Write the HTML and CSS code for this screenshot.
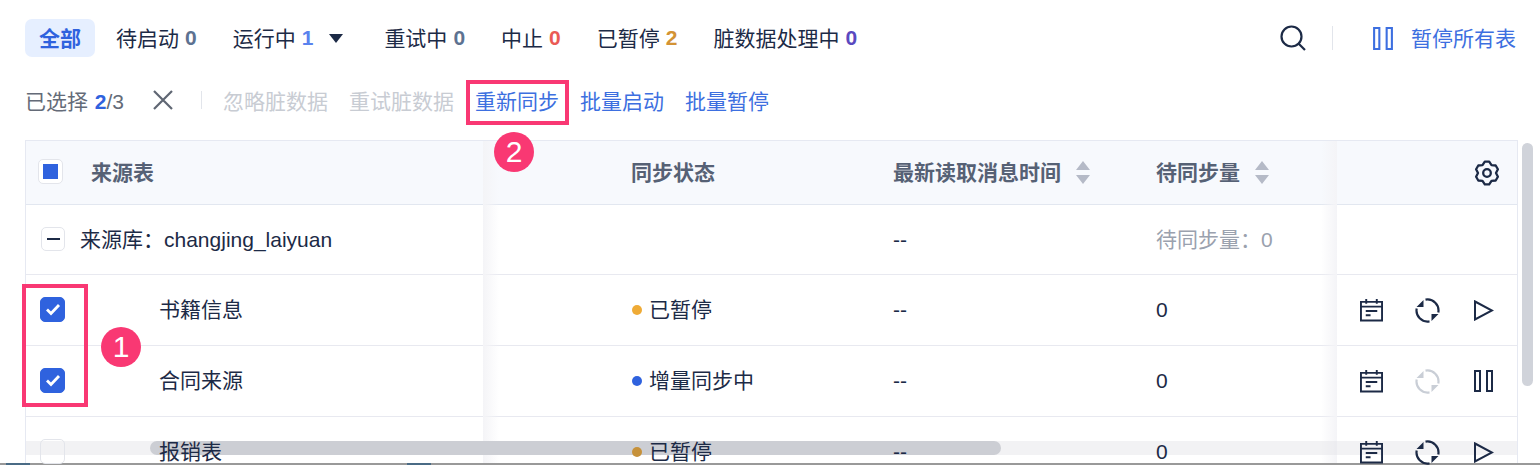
FILE: index.html
```html
<!DOCTYPE html>
<html lang="zh">
<head>
  <meta charset="UTF-8" />
  <title>同步任务</title>
  <link rel="stylesheet" href="styles.css">
</head>
<body>
  <svg class="defs" width="0" height="0">
    <symbol id="ic-cal" viewBox="0 0 24 24">
      <path d="M1 3.500h22v19.500H1zM1 8.500h22M6.500 0.500v5M17.500 0.500v5M6 13h12M6 17.500h5" fill="none" stroke="currentColor" stroke-width="2"/>
    </symbol>
    <symbol id="ic-sync" viewBox="0 0 25 25">
      <path d="M10.500 1.680A11 11 0 0 1 23.300 14.500M14.500 23.320A11 11 0 0 1 1.700 10.500" fill="none" stroke="currentColor" stroke-width="2.200"/>
      <path d="M8.500 2V9H1.500zM16.500 23V16h7z" fill="currentColor"/>
    </symbol>
    <symbol id="ic-play" viewBox="0 0 20 21">
      <path d="M1 1.500l17 9-17 9z" fill="none" stroke="currentColor" stroke-width="2"/>
    </symbol>
    <symbol id="ic-pause" viewBox="0 0 19 22">
      <path d="M1 1h5v20H1zM13 1h5v20h-5z" fill="none" stroke="currentColor" stroke-width="2"/>
    </symbol>
    <symbol id="ic-sort" viewBox="0 0 14 23">
      <path d="M7 0l7 9H0zM0 14h14l-7 9z" fill="currentColor"/>
    </symbol>
    <symbol id="ic-check" viewBox="0 0 16 16">
      <path d="M2 8.500l4 4 8-8.500" fill="none" stroke="currentColor" stroke-width="2.800"/>
    </symbol>
  </svg>

  <div class="page">
    <div class="tabs">
      <div class="tab-list">
        <span class="tab active"><span class="cjk">全部</span></span>
        <span class="tab first"><span class="cjk">待启动</span><b class="c-grey">0</b></span>
        <span class="tab"><span class="cjk">运行中</span><b class="c-blue">1</b><i class="caret"></i></span>
        <span class="tab"><span class="cjk">重试中</span><b class="c-grey">0</b></span>
        <span class="tab"><span class="cjk">中止</span><b class="c-red">0</b></span>
        <span class="tab"><span class="cjk">已暂停</span><b class="c-orange">2</b></span>
        <span class="tab"><span class="cjk">脏数据处理中</span><b class="c-purple">0</b></span>
      </div>
      <div class="tab-tools">
        <svg class="ic-search" viewBox="0 0 26 26"><circle cx="11.500" cy="11.500" r="10" fill="none" stroke="currentColor" stroke-width="2.200"/><path d="M18.500 18.500l6.500 6.500" stroke="currentColor" stroke-width="2.200"/></svg>
        <span class="vline"></span>
        <a class="pause-all"><svg class="ic-pause-all"><use href="#ic-pause"/></svg><span class="cjk">暂停所有表</span></a>
      </div>
    </div>

    <div class="batch">
      <span class="sel-count">已选择 <b>2</b>/3</span>
      <svg class="ic-close" viewBox="0 0 20 20"><path d="M1 1l18 18M19 1L1 19" stroke="currentColor" stroke-width="2.200"/></svg>
      <span class="vline short"></span>
      <a class="act off">忽略脏数据</a>
      <a class="act off">重试脏数据</a>
      <a class="act marked">重新同步</a>
      <a class="act">批量启动</a>
      <a class="act">批量暂停</a>
    </div>

    <div class="table-wrap">
      <div class="row head">
        <div class="c-name">
          <span class="box part"><i></i></span>
          <span class="name-title cjk2">来源表</span>
        </div>
        <div class="c-status"><span class="cjk2">同步状态</span></div>
        <div class="c-time"><span class="cjk2">最新读取消息时间</span><svg class="ic-sort"><use href="#ic-sort"/></svg></div>
        <div class="c-count"><span class="cjk2">待同步量</span><svg class="ic-sort"><use href="#ic-sort"/></svg></div>
        <div class="c-ops ops-head">
          <svg class="ic-gear" viewBox="-1 -1 26 26"><path d="M9.800.7h4.400l2.300 3.500 4.200.3 2.200 3.750L21 12l1.900 3.750-2.200 3.750-4.200.3-2.300 3.500H9.800l-2.300-3.500-4.200-.3-2.200-3.750L3 12 1.100 8.250 3.300 4.500l4.200-.3z" fill="none" stroke="currentColor" stroke-width="2.300" stroke-linejoin="round"/><circle cx="12" cy="12" r="3.800" fill="none" stroke="currentColor" stroke-width="2.300"/></svg>
        </div>
      </div>

      <div class="row group">
        <div class="c-name">
          <span class="box minus"><i></i></span>
          <span class="group-title cjk2">来源库：changjing_laiyuan</span>
        </div>
        <div class="c-status"></div>
        <div class="c-time">--</div>
        <div class="c-count muted"><span class="cjk2">待同步量：0</span></div>
        <div class="c-ops"></div>
      </div>

      <div class="row">
        <div class="c-name">
          <span class="box on"><svg><use href="#ic-check"/></svg></span>
          <span class="table-name cjk2">书籍信息</span>
        </div>
        <div class="c-status"><i class="dot orange"></i><span class="cjk2">已暂停</span></div>
        <div class="c-time">--</div>
        <div class="c-count">0</div>
        <div class="c-ops">
          <svg class="op op-cal"><use href="#ic-cal"/></svg>
          <svg class="op op-sync"><use href="#ic-sync"/></svg>
          <svg class="op op-run"><use href="#ic-play"/></svg>
        </div>
      </div>

      <div class="row">
        <div class="c-name">
          <span class="box on"><svg><use href="#ic-check"/></svg></span>
          <span class="table-name cjk2">合同来源</span>
        </div>
        <div class="c-status"><i class="dot blue"></i><span class="cjk2">增量同步中</span></div>
        <div class="c-time">--</div>
        <div class="c-count">0</div>
        <div class="c-ops">
          <svg class="op op-cal"><use href="#ic-cal"/></svg>
          <svg class="op op-sync off"><use href="#ic-sync"/></svg>
          <svg class="op op-hold"><use href="#ic-pause"/></svg>
        </div>
      </div>

      <div class="row last">
        <div class="c-name">
          <span class="box"></span>
          <span class="table-name cjk2">报销表</span>
        </div>
        <div class="c-status"><i class="dot gold"></i><span class="cjk2">已暂停</span></div>
        <div class="c-time">--</div>
        <div class="c-count">0</div>
        <div class="c-ops">
          <svg class="op op-cal"><use href="#ic-cal"/></svg>
          <svg class="op op-sync"><use href="#ic-sync"/></svg>
          <svg class="op op-run"><use href="#ic-play"/></svg>
        </div>
      </div>

      <div class="shadow-left"></div>
      <div class="shadow-right"></div>
      <div class="hbar"><div class="hthumb"></div></div>
    </div>
    <div class="vthumb"></div>
  </div>

  <div class="mark-box"></div>
  <span class="mark-num num-1">1</span>
  <span class="mark-num num-2">2</span>
  <div class="bottom-edge"><i></i><i class="second"></i></div>
</body>
</html>
```

FILE: styles.css
```css
html,
body {
  margin: 0;
  height: 465px;
  overflow: hidden;
  background: #fff;
}
body {
  font-family: "Liberation Sans", "Noto Sans CJK SC", sans-serif;
  font-size: 21px;
  color: #1c2a46;
  position: relative;
}
.defs {
  position: absolute;
}
.page {
  position: relative;
  padding: 19px 0 0 25px;
  width: 1493px;
}
/* the CJK font sits a little low next to the latin one */
.cjk {
  padding-bottom: 2px;
}
.cjk2 {
  padding-bottom: 4px;
}

/* tabs */
.tabs {
  display: flex;
  justify-content: space-between;
  align-items: center;
  height: 38px;
}
.tab-list {
  display: flex;
  align-items: center;
  gap: 36px;
}
.tab {
  display: flex;
  align-items: center;
  white-space: nowrap;
}
.tab b {
  font-weight: 700;
  margin-left: 6px;
}
.tab.active {
  width: 70px;
  height: 38px;
  justify-content: center;
  background: #e6efff;
  border-radius: 7px;
  color: #2f62de;
  font-weight: 700;
}
.tab.first {
  margin-left: -15px;
}
.caret {
  margin: 0 5px 0 16px;
  border-left: 7px solid transparent;
  border-right: 7px solid transparent;
  border-top: 9px solid #1c2a46;
}
.c-grey { color: #5d7291; }
.c-blue { color: #5a82ee; }
.c-red { color: #ea5a55; }
.c-orange { color: #d39334; }
.c-purple { color: #5a49bf; }

.tab-tools {
  display: flex;
  align-items: center;
}
.ic-search {
  width: 26px;
  height: 26px;
}
.vline {
  width: 1px;
  height: 24px;
  background: #e2e5eb;
  margin: 0 40px 0 26px;
}
.pause-all {
  display: flex;
  align-items: center;
  color: #3d6fe0;
  margin-right: 2px;
}
.ic-pause-all {
  width: 20px;
  height: 23px;
  margin-right: 18px;
}

/* batch bar */
.batch {
  display: flex;
  align-items: center;
  height: 30px;
  margin-top: 28px;
  color: #646b78;
}
.sel-count b {
  color: #2f62de;
  margin-left: 1px;
}
.ic-close {
  width: 20px;
  height: 20px;
  margin-left: 29px;
  color: #5f6673;
}
.vline.short {
  height: 18px;
  margin: 0 21px 0 28px;
}
.act {
  color: #3d6fe0;
  margin-right: 21px;
  white-space: nowrap;
}
.act.off {
  color: #c8ccd3;
}

/* table */
.table-wrap {
  position: relative;
  margin-top: 25px;
  width: 1493px;
  border-top: 1px solid #e6e9f2;
  border-left: 1px solid #e6e9f2;
  border-right: 1px solid #e6e9f2;
  box-sizing: border-box;
}
.row {
  display: grid;
  grid-template-columns: 605px 262px 263px 181px 1fr;
  align-items: center;
  height: 70px;
  border-bottom: 1px solid #e8e9f0;
}
.row.head {
  height: 63px;
  background: #f7f9fd;
  border-bottom-color: #e2e7f0;
  color: #566175;
  font-weight: 700;
}
.row.group {
  height: 69px;
}
.row.last > * {
  position: relative;
  z-index: 3;
}
.c-name {
  display: flex;
  align-items: center;
}
.box {
  flex: none;
  width: 25px;
  height: 25px;
  margin: 0 0 2px 14px;
  border: 1px solid #e3e5eb;
  border-radius: 5px;
  box-sizing: border-box;
  display: flex;
  align-items: center;
  justify-content: center;
}
.box.part {
  margin-left: 12px;
  background: #fff;
}
.box.part i {
  width: 15px;
  height: 15px;
  background: #2f62de;
}
.box.minus {
  width: 24px;
  height: 24px;
  margin-left: 15px;
}
.box.minus i {
  width: 13px;
  height: 2px;
  background: #1c2a46;
}
.box.on {
  background: #2f62de;
  border-color: #2f62de;
  color: #fff;
}
.box.on svg {
  width: 16px;
  height: 16px;
}
.name-title {
  margin-left: 28px;
}
.group-title {
  margin-left: 15px;
}
.table-name {
  margin-left: 94px;
}
.c-time,
.c-count,
.c-status {
  display: flex;
  align-items: center;
  white-space: nowrap;
}
.ic-sort {
  width: 14px;
  height: 23px;
  margin-left: 15px;
  color: #b5bac7;
}
.muted {
  color: #9aa1ae;
}
.dot {
  width: 10px;
  height: 10px;
  border-radius: 50%;
  margin: 0 7px 0 1px;
}
.dot.orange { background: #efab36; }
.dot.blue { background: #2f62de; }
.dot.gold { background: #c6913a; }
.c-ops {
  display: flex;
  align-items: center;
  position: relative;
  z-index: 2;
  height: 100%;
  padding-left: 23px;
  color: #1c2a46;
}
.ops-head {
  justify-content: flex-end;
  padding-right: 17px;
}
.ic-gear {
  width: 26px;
  height: 26px;
}
.op {
  flex: none;
}
.op-cal {
  width: 23px;
  height: 24px;
  margin-right: 32px;
}
.op-sync {
  width: 25px;
  height: 25px;
  margin-right: 34px;
}
.op-sync.off {
  color: #c9ced6;
}
.op-run {
  width: 20px;
  height: 21px;
}
.op-hold {
  width: 19px;
  height: 22px;
}

.shadow-left,
.shadow-right {
  position: absolute;
  top: 0;
  bottom: 0;
  width: 16px;
  pointer-events: none;
}
.shadow-left {
  left: 457px;
  background: linear-gradient(to right, #f4f4f7, rgba(255, 255, 255, 0));
}
.shadow-right {
  left: 1295px;
  background: linear-gradient(to left, #f4f4f7, rgba(255, 255, 255, 0));
}
.hbar {
  position: absolute;
  left: 0;
  right: 0;
  top: 300px;
  height: 14px;
  background: rgba(226, 227, 230, 0.45);
}
.hthumb {
  position: absolute;
  left: 124px;
  width: 851px;
  height: 14px;
  border-radius: 7px;
  background: #ccced4;
}
.vthumb {
  position: absolute;
  left: 1522px;
  top: 143px;
  width: 11px;
  height: 243px;
  border-radius: 6px;
  background: #d0d3da;
}

/* annotation marks */
.mark-box {
  position: absolute;
  left: 22px;
  top: 284px;
  width: 66px;
  height: 123px;
  border: 4px solid #f93873;
  box-sizing: border-box;
}
.act.marked {
  position: relative;
}
.act.marked::after {
  content: "";
  position: absolute;
  left: -9px;
  top: -5px;
  right: -10px;
  bottom: -10px;
  border: 4px solid #f93873;
}
.mark-num {
  position: absolute;
  width: 40px;
  height: 40px;
  border-radius: 50%;
  background: #f93873;
  color: #fff;
  font-size: 30px;
  display: flex;
  align-items: center;
  justify-content: center;
}
.num-1 {
  left: 101px;
  top: 327px;
}
.num-2 {
  left: 494px;
  top: 132px;
}
.bottom-edge {
  position: absolute;
  left: 0;
  right: 0;
  top: 463px;
  height: 2px;
  background: #999;
  display: flex;
}
.bottom-edge i {
  width: 24px;
  margin-left: 6px;
  background: #4a6b85;
}
.bottom-edge .second {
  margin-left: 377px;
}
```
